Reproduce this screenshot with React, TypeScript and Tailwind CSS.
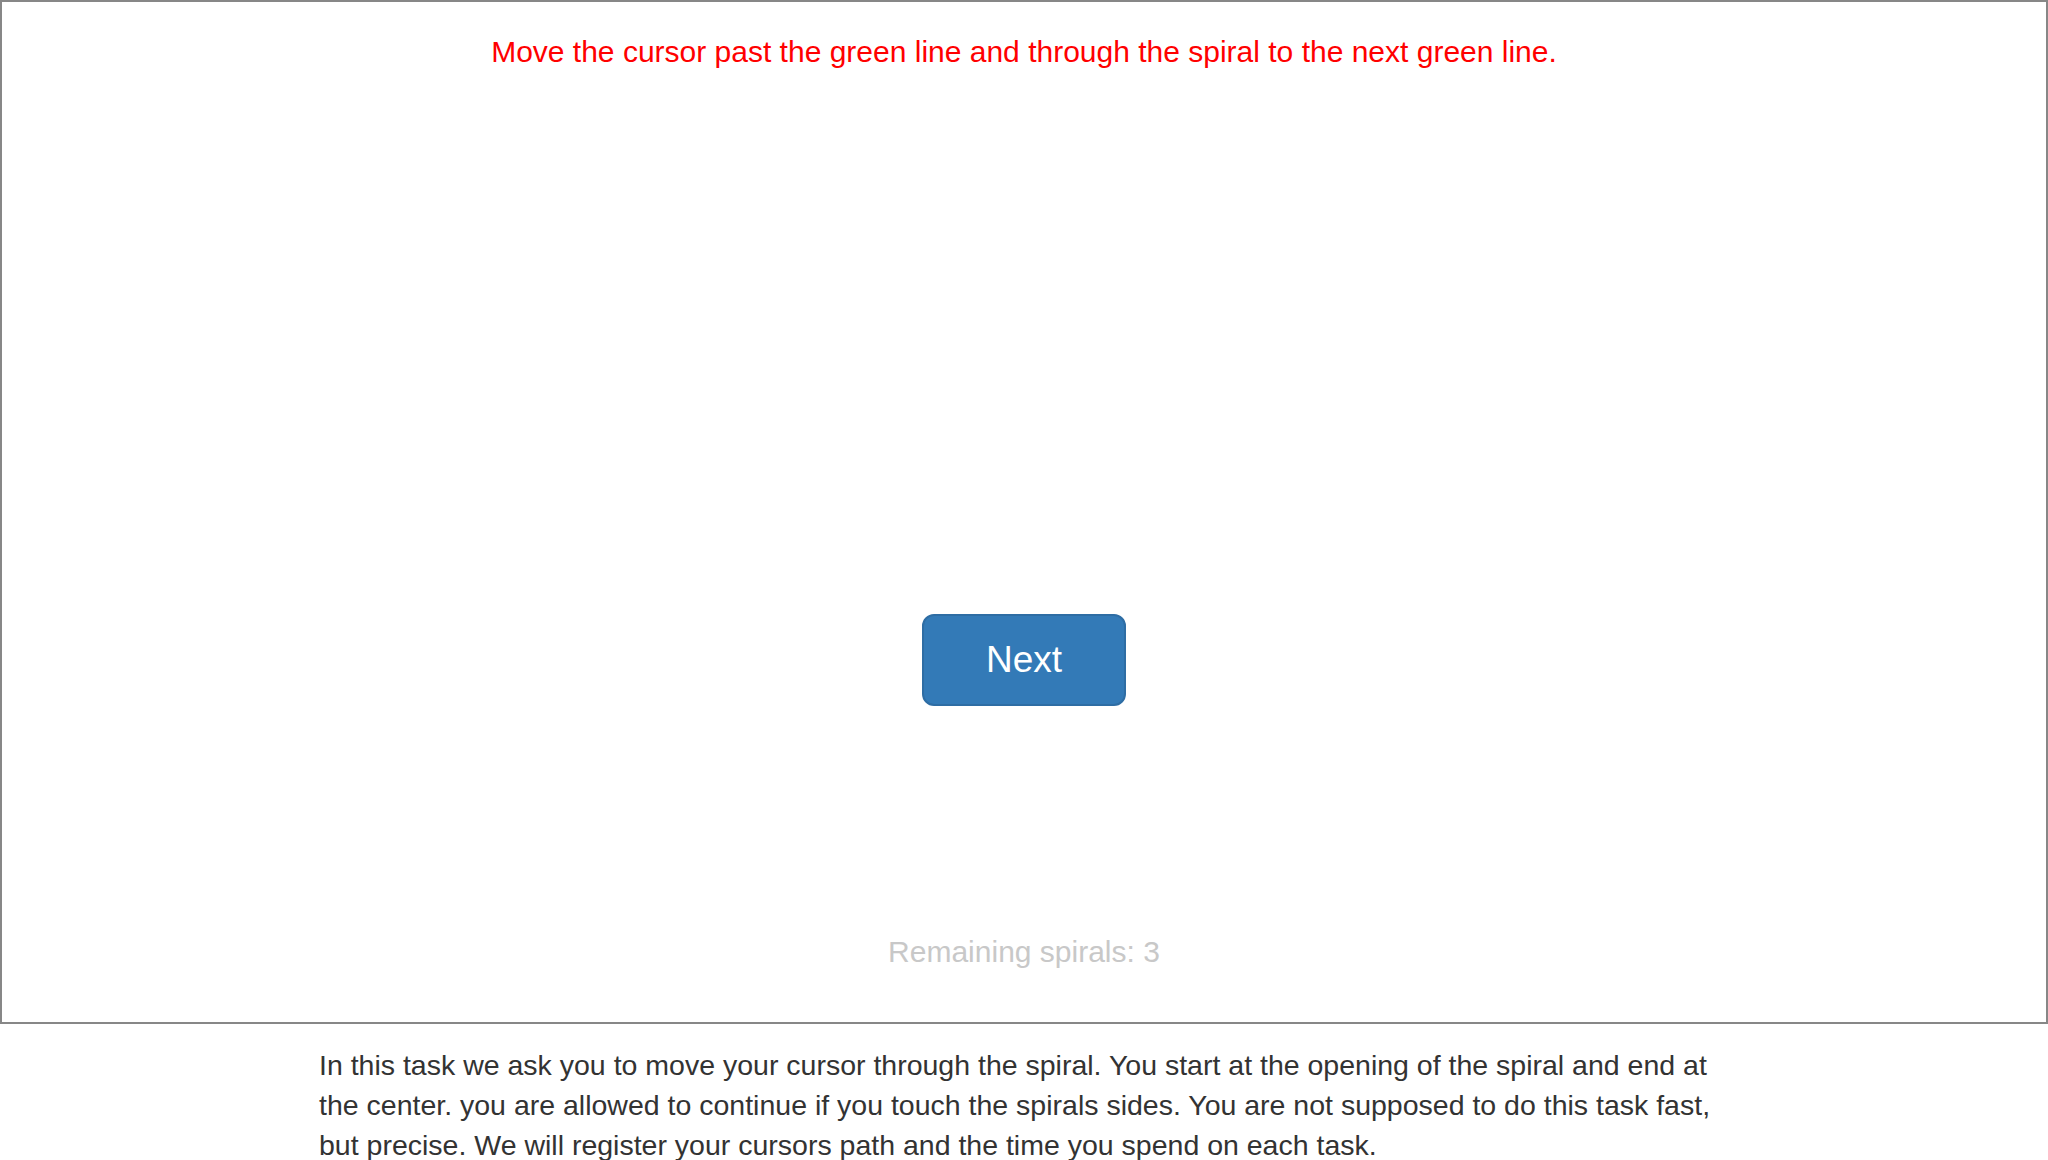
export default function App() {
  return (
    <div className="w-[2048px] bg-white font-['Liberation_Sans',Arial,sans-serif]">
      <div className="flex h-[1024px] flex-col items-center border-2 border-[#878787]">
        <p className="mt-[30px] text-[30px] leading-[40px] text-[#ff0000]">
          Move the cursor past the green line and through the spiral to the next green line.
        </p>
        <button className="mt-[542px] h-[92px] w-[204px] rounded-[12px] border-2 border-[#2e6da4] bg-[#337ab7] text-[37px] text-white">
          Next
        </button>
        <p className="mt-[226px] text-[30px] leading-[40px] text-[#c8c8c8]">Remaining spirals: 3</p>
      </div>
      <p className="mx-auto mt-[21px] w-[1410px] text-[28.5px] leading-[40px] text-[#333333]">
        In this task we ask you to move your cursor through the spiral. You start at the opening of the spiral and end at the center. you are allowed to continue if you touch the spirals sides. You are not supposed to do this task fast, but precise. We will register your cursors path and the time you spend on each task.
      </p>
    </div>
  );
}
